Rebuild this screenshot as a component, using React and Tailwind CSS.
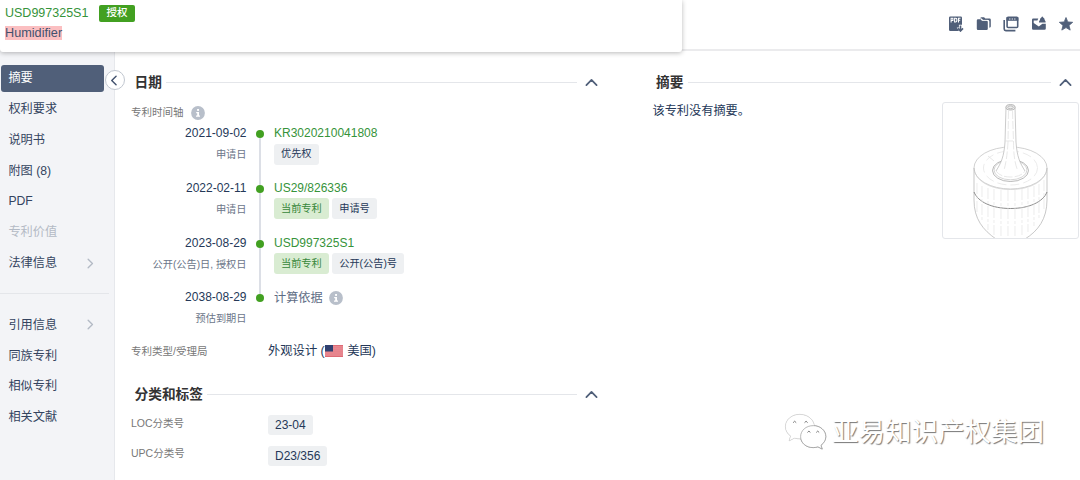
import React from 'react';
import clsx from 'clsx';

const menu = [
  { label: '摘要', active: true },
  { label: '权利要求' },
  { label: '说明书' },
  { label: '附图 (8)' },
  { label: 'PDF' },
  { label: '专利价值', disabled: true },
  { label: '法律信息', expandable: true }
];

const relatedMenu = [
  { label: '引用信息', expandable: true },
  { label: '同族专利' },
  { label: '相似专利' },
  { label: '相关文献' }
];

const timeline = [
  { date: '2021-09-02', event: '申请日', number: 'KR3020210041808', tags: ['优先权'] },
  { date: '2022-02-11', event: '申请日', number: 'US29/826336', current: true, tags: ['申请号'] },
  { date: '2023-08-29', event: '公开(公告)日, 授权日', number: 'USD997325S1', current: true, tags: ['公开(公告)号'] },
  { date: '2038-08-29', event: '预估到期日', basis: '计算依据', tags: [] }
];

function Chevron({ className, d }) {
  return (
    <svg className={className} viewBox="0 0 14 14" fill="none" stroke="currentColor" strokeLinecap="round" strokeLinejoin="round">
      <path d={d} />
    </svg>
  );
}

function InfoIcon() {
  return (
    <svg className="size-[14px] shrink-0" viewBox="0 0 14 14">
      <circle cx="7" cy="7" r="6.9" fill="#b8bfca" />
      <rect x="6.1" y="3" width="1.9" height="1.9" fill="#fff" />
      <path d="M5.2 6H8v3.4h1v1.3H5V9.4h1.2V7.2h-1z" fill="#fff" />
    </svg>
  );
}

function MenuItem({ label, active, disabled, expandable }) {
  return (
    <div className="flex h-[30.8px] items-center pl-[1px]">
      <div
        className={clsx(
          'flex h-[27px] w-[102.5px] items-center justify-between rounded-[3px] pl-[7.4px] pr-[7.5px] text-[12.2px]',
          active && 'bg-[#505f79] text-white',
          disabled && 'text-[#b3bac5]',
          !active && !disabled && 'text-[#344460]'
        )}
      >
        <span>{label}</span>
        {expandable && <Chevron className="size-[11px] stroke-[1.7] text-[#b3bac5]" d="M4 1.5L9.5 7L4 12.5" />}
      </div>
    </div>
  );
}

function SectionTitle({ title }) {
  return (
    <div className="flex h-5 items-center pl-[3.5px]">
      <h2 className="pt-px text-[13.7px] leading-5 font-bold text-[#333]">{title}</h2>
      <div className="ml-[4.5px] h-px flex-1 bg-[#e4e6ea]" />
      <Chevron className="mr-px ml-[8px] size-[13px] stroke-[1.9] text-[#505f79]" d="M1.5 9.8L7 4.2L12.5 9.8" />
    </div>
  );
}

function Tag({ children, green }) {
  return (
    <span
      className={clsx(
        'flex h-[21px] items-center rounded-[3px] px-[7px] text-[10.2px]',
        green ? 'bg-[#d9ecd2] text-[#36873a]' : 'bg-[#eef0f2] text-[#253858]'
      )}
    >
      {children}
    </span>
  );
}

function TimelineRow({ item, last }) {
  return (
    <div className={clsx('flex', last ? 'h-[44px]' : 'h-[54.8px]')}>
      <div className="w-[115.5px] shrink-0 text-right">
        <div className="h-[20px] text-[12px] leading-[20px] text-[#253858]">{item.date}</div>
        <div className="h-[21px] text-[10.2px] leading-[23px] text-[#6b7689]">{item.event}</div>
      </div>
      <div className="ml-[9px] flex w-[9px] shrink-0 flex-col items-center pt-[7px]">
        <div className="size-[8px] shrink-0 rounded-full bg-[#42a021]" />
        {!last && <div className="-mb-[7px] w-[1.5px] flex-1 bg-[#dcdfe6]" />}
      </div>
      <div className="ml-[9.5px]">
        {item.basis ? (
          <div className="flex h-[22px] items-center gap-[6px] text-[12.2px] text-[#5e6c84]">
            {item.basis}
            <InfoIcon />
          </div>
        ) : (
          <div className="h-5 text-[12px] leading-5 text-[#36933a]">{item.number}</div>
        )}
        <div className="flex gap-[3.5px] pt-[0.5px]">
          {item.current && <Tag green>当前专利</Tag>}
          {item.tags.map((tag) => (
            <Tag key={tag}>{tag}</Tag>
          ))}
        </div>
      </div>
    </div>
  );
}

function Flag() {
  return (
    <svg className="mr-[4.5px] h-[12px] w-[18px]" viewBox="0 0 18 12">
      <rect width="18" height="12" fill="#e98991" />
      <path d="M0 .5h18M0 11.5h18" stroke="#d9626d" strokeWidth=".8" />
      <path d="M0 2.4h18M0 4.3h18M0 6.2h18M0 8.1h18M0 10h18" stroke="#e27c86" strokeWidth=".6" />
      <rect width="8" height="6.5" fill="#30406f" />
    </svg>
  );
}

// Toolbar: export pdf, folder, workspace, alert, favourite
function Toolbar() {
  return (
    <div className="flex items-center gap-[11.5px] text-[#505f79]">
      <svg className="size-4" viewBox="0 0 16 16" fill="currentColor">
        <path d="M2.3.4h10.4q1.3 0 1.3 1.3V8.8h-3.1v2.6H8.7l2 2.8v.8H2.3Q1 15 1 13.700V1.7Q1 .4 2.3.4z" />
        <path d="M3.1 6.6V2.2h1.8v2.3H3.1M6.6 2.2v3.8h1q1.200 0 1.200-.9V3.100q0-.9-1.200-.9zM10.500 6.600V2.200h2M10.500 4.300h1.700" fill="none" stroke="#fff" strokeWidth="1.050" />
        <path d="M12.500 9.500v5M10 12.400l2.500 2.600 2.500-2.600" fill="none" stroke="currentColor" strokeWidth="1.600" />
      </svg>
      <svg className="size-4" viewBox="0 0 16 16" fill="currentColor">
        <path d="M.8 4.500q0-1.200 1.200-1.200h2.700l1.200 1.400h4.700q1.200 0 1.200 1.200v6.900q0 1.200-1.200 1.200H2Q.8 14 .8 12.800z" />
        <path d="M4.300 2.500q.2-1.200 1.200-1.200h2.600l1.200 1.300h4.300q1.200 0 1.200 1.200v6.700q0 1-1.500 1.200V5.300q0-1.400-1.400-1.400H7L5.700 2.500z" />
        <path d="M5.500 3.300l1.200 1h4.800q1.100 0 1.100 1.200v5.800" fill="none" stroke="#fff" strokeWidth=".6" />
      </svg>
      <svg className="size-4" viewBox="0 0 16 16" fill="none" stroke="currentColor">
        <rect x="4.100" y="1.200" width="10.600" height="10.300" rx="1" strokeWidth="1.600" />
        <path d="M3.500 1.200h11.800v3.600H3.500z" fill="currentColor" stroke="none" />
        <path d="M6.200 3h1.200M8.700 3h1.200M11.200 3h1.200" stroke="#fff" strokeWidth="1.200" />
        <path d="M1.200 4v9q0 1.600 1.600 1.600h9.600" strokeWidth="1.600" />
      </svg>
      <svg className="size-4" viewBox="0 0 16 16" fill="currentColor">
        <path d="M1 3.700q0-1.200 1.200-1.200h5.100L6.400 4.500H2.700v2.600l5.100 3.300 3.600-2.700h3.400v4.700q0 1.300-1.300 1.300H2.300Q1 13.700 1 12.400z" />
        <path d="M10.400 1.500q.9-1.800 1.800 0 1.500.5 1.500 2.500l.9 1.500v.9H8v-.9L8.900 4q0-2 1.500-2.500z" />
      </svg>
      <svg className="size-4" viewBox="0 0 16 16" fill="currentColor" stroke="currentColor" strokeLinejoin="round">
        <path d="M8 1.500l1.800 4.400 4.900.4-3.700 3.100 1.200 4.700L8 11.600 3.800 14.100 5 9.400 1.300 6.300l4.900-.4z" strokeWidth=".8" />
      </svg>
    </div>
  );
}

function HumidifierDrawing() {
  return (
    <svg className="h-[135px] w-[135px]" viewBox="0 0 135 135" fill="none" stroke="#bdbdbd" strokeWidth=".7">
      <ellipse cx="67.5" cy="65" rx="36.5" ry="21" />
      <path d="M31 65v32C31 116 40 127 53 136h29c13-8 22-20 22-39V65" stroke="#b0b0b0" />
      <path d="M31.500 68c3 11 17 18.500 36 18.500s33-7.500 36-18.500" stroke="#d0d0d0" />
      <path d="M31 89c4 10 18 16.500 36.500 16.500S100 99 104 89" stroke="#808080" strokeWidth=".9" />
      <path d="M34 80v30M39 83v36M45 85v42M51 86v46M58 87v46M65 87v46M72 87v46M79 86v46M85 85v44M91 83v40M96 81v34M101 77v30" stroke="#e4e4e4" strokeDasharray="11 2 3 2" />
      <ellipse cx="67.500" cy="65" rx="27" ry="17" stroke="#e2e2e2" strokeDasharray="9 4" />
      <ellipse cx="67.500" cy="67.500" rx="18" ry="11" stroke="#999" />
      <ellipse cx="67.500" cy="67" rx="16.500" ry="9.800" stroke="#c4c4c4" />
      <path d="M63 4.500L62 39C61 54 58 60 53 68q14 9 29 0c-5-8-8-14-9-29L72 4.500z" fill="#fff" stroke="none" />
      <path d="M63 4.500L62 39C61 54 58 60 53 68M72 4.500L73 39c1 15 4 21 9 29" stroke="#b4b4b4" />
      <path d="M65.500 8L65 39q-1 18-4 28M69.500 8l1 31q0 18 4 28M62 38h11M53 68q4 6 14.500 6T82 68" stroke="#dedede" strokeDasharray="8 2" />
      <ellipse cx="67.500" cy="4.300" rx="4.600" ry="2.700" fill="#eee" stroke="#999" />
      <ellipse cx="67.500" cy="4.300" rx="2.800" ry="1.400" stroke="#aaa" />
      <path d="M45 53l6 5" stroke="#ddd" />
    </svg>
  );
}

function Watermark() {
  return (
    <div className="absolute top-[413px] left-[784px] flex items-center">
      <svg
        className="-mt-[3px] h-[38px] w-[43px] drop-shadow-[0.5px_0.5px_0.5px_#999999]"
        viewBox="0 0 44 38"
        fill="#fff"
        stroke="#d8d8d8"
        strokeWidth=".4"
      >
        <path d="M16 2C8 2 1.500 7.500 1.500 14.500c0 4 2 7.300 5.300 9.700L5.300 29l5.500-2.800c2 .5 3.600.8 5.500.8 8.200 0 14.700-5.500 14.700-12.500S24.200 2 16 2z" />
        <path d="M30 13.500c-7.500 0-13 5-13 11.300S22.500 36 30 36c1.600 0 3.200-.4 4.700-.8l4.400 2.300-1.300-3.900c3-2.200 5-5.300 5-8.800 0-6.300-5.800-11.300-12.800-11.300z" stroke="#999" strokeWidth=".7" />
        <path d="M9.300 10.500q1.600-3 3.200 0M21 10.500q1.600-3 3.200 0M24 20.500q1.500-2.800 3 0M33 20.500q1.500-2.800 3 0" fill="none" stroke="#777" strokeWidth="1" />
      </svg>
      <span className="ml-[5px] text-[26.500px] leading-[38px] whitespace-nowrap text-white [text-shadow:1px_1px_1px_#777777]">
        亚易知识产权集团
      </span>
    </div>
  );
}

export default function App() {
  return (
    <div className="relative flex h-[480px] w-[1080px] flex-col overflow-hidden bg-white font-['Liberation_Sans','Noto_Sans_CJK_SC',sans-serif]">
      <header className="flex h-[51px] shrink-0 items-center justify-end border-b-2 border-[#ebebed] pr-[6px] pb-[2px]">
        <Toolbar />
      </header>

      {/* Sticky patent title, floats over the page header */}
      <div className="absolute top-0 left-0 z-10 h-[52px] w-[682px] rounded-b-[3px] bg-white pl-[5px] shadow-[0_1px_5px_rgba(0,0,0,0.28)]">
        <div className="flex h-[23px] items-center gap-[10.500px] pt-[3px]">
          <span className="text-[12.500px] text-[#36933a]">USD997325S1</span>
          <span className="flex h-[17px] w-[36px] items-center justify-center rounded-[2px] bg-[#42a021] text-[10.500px] font-medium text-white">授权</span>
        </div>
        <div className="flex h-[20px] items-center">
          <span className="bg-[#fbbfc1] text-[12.700px] leading-[14px] text-[#42526e]">Humidifier</span>
        </div>
      </div>

      <div className="flex flex-1">
        <aside className="relative w-[115px] shrink-0 border-r border-[#e6e8ec] bg-[#f3f4f7] pt-[12px]">
          <nav>
            {menu.map((item) => (
              <MenuItem key={item.label} {...item} />
            ))}
          </nav>
          <div className="mt-[14px] mr-[5px] h-[1.500px] bg-[#e4e6ea]" />
          <nav className="mt-[15.500px]">
            {relatedMenu.map((item) => (
              <MenuItem key={item.label} {...item} />
            ))}
          </nav>
          <button
            type="button"
            className="absolute top-[19px] -right-[11px] flex size-[20px] items-center justify-center rounded-full border border-[#c1c7d0] bg-white"
          >
            <Chevron className="mr-px size-[11px] stroke-[1.800] text-[#42526e]" d="M9 1.500L3.500 7L9 12.500" />
          </button>
        </aside>

        <main className="flex flex-1 pt-[21px]">
          <div className="ml-[16px] w-[467.500px] shrink-0">
            <SectionTitle title="日期" />
            <div className="flex h-[31px] items-center gap-[7px] pt-[10px] text-[10.500px] text-[#777]">
              专利时间轴
              <InfoIcon />
            </div>
            {timeline.map((item, i) => (
              <TimelineRow key={item.date} item={item} last={i === timeline.length - 1} />
            ))}
            <div className="mt-[10px] flex h-[20px] items-center">
              <span className="w-[137px] text-[10.500px] text-[#777]">专利类型/受理局</span>
              <span className="flex items-center text-[12.300px] text-[#253858]">
                外观设计 (<Flag />美国)
              </span>
            </div>

            <div className="mt-[23.500px]">
              <SectionTitle title="分类和标签" />
            </div>
            <div className="mt-[8.500px] flex h-[24px] items-center">
              <span className="w-[137px] pb-[4px] text-[10.500px] text-[#777]">LOC分类号</span>
              <span className="flex h-[20px] items-center rounded-[3px] bg-[#eef0f2] px-[7px] text-[12px] text-[#253858]">23-04</span>
            </div>
            <div className="mt-[6.500px] flex h-[24px] items-center">
              <span className="w-[137px] pb-[4px] text-[10.500px] text-[#777]">UPC分类号</span>
              <span className="flex h-[20px] items-center rounded-[3px] bg-[#eef0f2] px-[7px] text-[12px] text-[#253858]">D23/356</span>
            </div>
          </div>

          <div className="ml-[54px] w-[426px] shrink-0">
            <div className="pr-[6px]">
              <SectionTitle title="摘要" />
            </div>
            <div className="flex justify-between pt-[10px]">
              <p className="pt-px text-[12.200px] leading-[16px] text-[#253858]">该专利没有摘要。</p>
              <div className="size-[137px] rounded-[3px] border border-[#e4e6ea]">
                <HumidifierDrawing />
              </div>
            </div>
          </div>
        </main>
      </div>

      <Watermark />
    </div>
  );
}
